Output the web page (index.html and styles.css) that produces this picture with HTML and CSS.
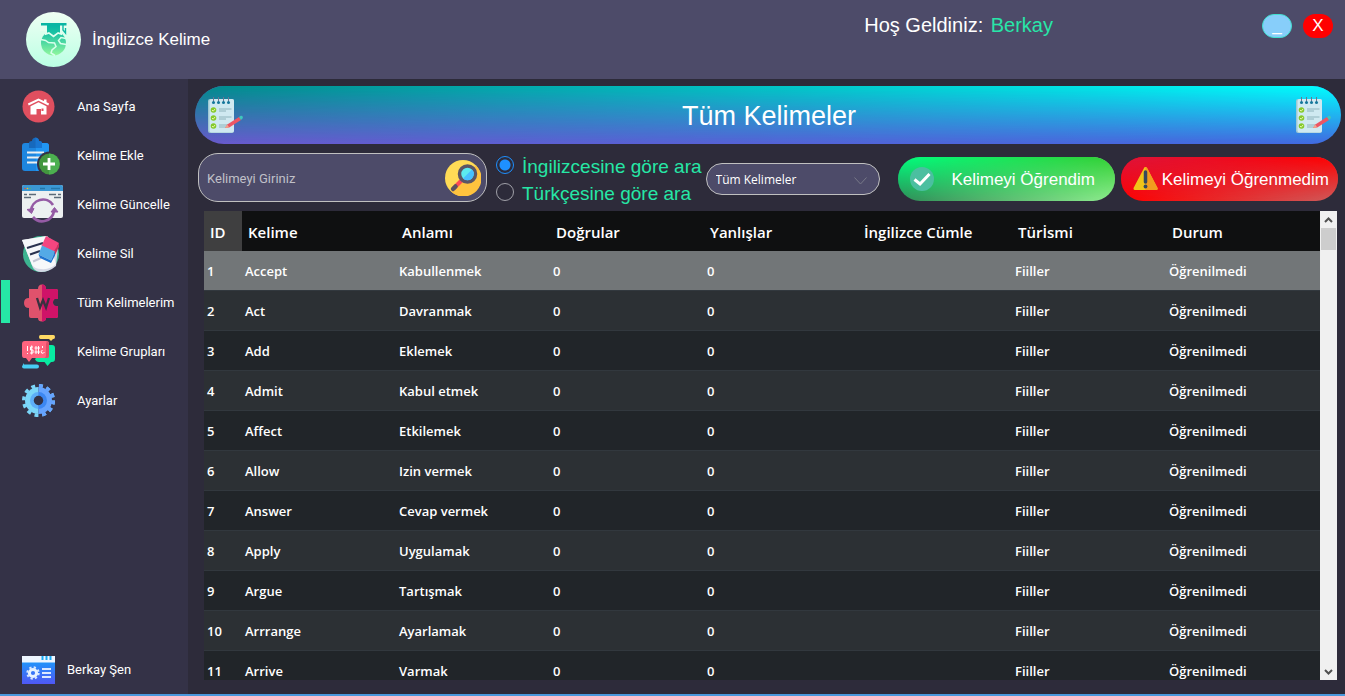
FILE: index.html
```html
<!DOCTYPE html>
<html lang="tr">
<head>
<meta charset="utf-8">
<title>İngilizce Kelime</title>
<link rel="stylesheet" href="styles.css">
</head>
<body>
<svg class="defs" aria-hidden="true">
  <symbol id="notes" viewBox="0 0 36 36">
    <rect x="1" y="2" width="26" height="34" rx="2" fill="#9fc9d3"/>
    <rect x="2.500" y="2" width="24.500" height="33.500" rx="2" fill="#cfe9f1"/>
    <path d="M6.500 0v5M11.500 0v5M16.500 0v5M21.500 0v5" stroke="#6b7590" stroke-width="1"/>
    <g fill="#15789c"><circle cx="6.500" cy="5.500" r="1.500"/><circle cx="11.500" cy="5.500" r="1.500"/><circle cx="16.500" cy="5.500" r="1.500"/><circle cx="21.500" cy="5.500" r="1.500"/></g>
    <g fill="#85c92b"><circle cx="6.500" cy="13" r="2.800"/><circle cx="6.500" cy="21" r="2.800"/><circle cx="6.500" cy="29" r="2.800"/></g>
    <path d="M5 13l1.200 1.200 2-2.400M5 21l1.200 1.200 2-2.400M5 29l1.200 1.200 2-2.400" fill="none" stroke="#e4f7a8" stroke-width="1"/>
    <path d="M12 12h12.500M12 14h7M12 20h12.500M12 22h7M12 28h9M12 30h7" stroke="#8fb4bd" stroke-width="1"/>
    <path d="M18 31l2.300-3.600L32 20l2 3-11.800 7.600z" fill="#ec5564"/>
    <path d="M18 31l2.300-3.600 1.900 3.100z" fill="#f3a58c"/>
    <path d="M32 20l1.800-1.200c1.500-.6 2.700 1.400 1.700 2.600L34 23z" fill="#3fc6bb"/>
  </symbol>
</svg>
<div class="app">
  <header class="topbar">
    <svg class="logo" viewBox="0 0 56 56" role="img" aria-label="Logo">
      <defs>
        <linearGradient id="lg1" x2="0" y2="1"><stop stop-color="#effff3"/><stop offset="1" stop-color="#bbffe4"/></linearGradient>
        <linearGradient id="lg3" gradientUnits="userSpaceOnUse" x1="0" y1="11" x2="0" y2="45"><stop stop-color="#00b3a4"/><stop offset=".3" stop-color="#1cc3a4"/><stop offset="1" stop-color="#9bfb9e"/></linearGradient>
      </defs>
      <circle cx="27.500" cy="27.500" r="27.500" fill="url(#lg1)"/>
      <circle cx="27.500" cy="31" r="12.500" fill="url(#lg3)"/>
      <path d="M20 12h15v9.500l-3-1-4.500 3.500-4.500-3.500-3 1z" fill="url(#lg3)" stroke="#e0fff0" stroke-width="2.400"/>
      <path d="M14 14h6.500v5H14zM34.500 14H42v5h-7.500z" fill="#e6fff0"/>
      <path d="M21 13h13v7.800l-2-.8-4.500 3.200L23 20l-2 .8z" fill="url(#lg3)"/>
      <path d="M15 11h25.500v2.500H15z" fill="#0ab6a4"/>
      <path d="M37 13v5l2.500 3v-5" fill="none" stroke="#0fb9a4" stroke-width="1.400"/>
      <path d="M15 27.500l4.500 1 3 2 6 .5 1.500 3.500-4 3.500-1 3 4 2.500" fill="none" stroke="#d9ffec" stroke-width="1.500"/>
      <path d="M40 26.500l-5-1-2.500 3 2 3 6 1" fill="none" stroke="#d9ffec" stroke-width="1.500"/>
    </svg>
    <h1 class="brand">İngilizce Kelime</h1>
    <p class="welcome">Hoş Geldiniz: <span class="user">Berkay</span></p>
    <div class="window-buttons">
      <button class="win win-min" type="button" aria-label="Küçült"><span>_</span></button>
      <button class="win win-close" type="button" aria-label="Kapat">X</button>
    </div>
  </header>

  <nav class="sidebar">
    <a class="item" href="#"><span class="icon">
      <svg width="33" height="33" viewBox="0 0 33 33"><circle cx="16.500" cy="16.500" r="16" fill="#e04f5f"/><path d="M6.300 14.500L16.500 9.500l10.200 5" fill="none" stroke="#fff" stroke-width="2"/><path d="M8.500 16.200l8-4 8 4v8.300H19v-5.500h-4.500v5.500h-6z" fill="#fff"/><path d="M22 9.500h2.500v4L22 12z" fill="#fff"/><path d="M19.500 18.500h2v2.500h-2z" fill="#e04f5f"/></svg>
    </span>Ana Sayfa</a>
    <a class="item" href="#"><span class="icon">
      <svg width="38" height="38" viewBox="0 0 38 38"><path d="M3 6h21q3 0 3 3v25H3q-3 0-3-3V9q0-3 3-3z" fill="#1e86df"/><path d="M14 6h10q3 0 3 3v25H14z" fill="#2196f3"/><path d="M7 11V6q0-2 3-2 0-3 3.500-3.500Q17 1 17 4q3 0 3 2v5z" fill="#1669bd"/><path d="M13.500.5Q17 1 17 4q3 0 3 2v5h-6.500z" fill="#1976d2"/><path d="M5 15.500h17M5 20.500h15M5 25.500h12" stroke="#eceff1" stroke-width="2"/><circle cx="27.500" cy="27" r="12.500" fill="#343247"/><circle cx="27.500" cy="27" r="10.500" fill="#43963f"/><path d="M27 16.500a10.500 10.500 0 010 21z" fill="#4caf50"/><path d="M27 21v12M21 27h12" stroke="#fff" stroke-width="2.800"/></svg>
    </span>Kelime Ekle</a>
    <a class="item" href="#"><span class="icon">
      <svg width="41" height="39" viewBox="0 0 41 39"><rect width="41" height="33" rx="2" fill="#ecf0f1"/><path d="M0 6V2q0-2 2-2h37q2 0 2 2v4z" fill="#3b97d3"/><path d="M18 3.500h5M29 3.500h9" stroke="#2677aa" stroke-width="1.500"/><circle cx="3" cy="3.500" r=".8" fill="#e64c3c"/><circle cx="5.500" cy="3.500" r=".8" fill="#f0c419"/><circle cx="8" cy="3.500" r=".8" fill="#4fba6f"/><path d="M2 9.500h3M7 9.500h7M27 9.500h7M36 9.500h3M2 12.500h7M32 12.500h7" stroke="#5b6b79" stroke-width="1.300"/><path d="M9 26a12 12 0 0122-6" fill="none" stroke="#955ba5" stroke-width="2.700"/><path d="M32 26a12 12 0 01-21 6" fill="none" stroke="#955ba5" stroke-width="2.700"/><path d="M5 24.500l7-1-2.500 5zM29 27l3.500-4.500L36 27z" fill="#955ba5" stroke="#955ba5"/></svg>
    </span>Kelime Güncelle</a>
    <a class="item" href="#"><span class="icon">
      <svg width="38" height="38" viewBox="0 0 38 38"><circle cx="19" cy="19" r="18" fill="#3cb490"/><path d="M0 5L25 1l11 12-2 18q-7 6-15 6-5 0-8-4z" fill="#d5d9e6"/><path d="M0 5L25 1l9 28q-6 6-15 5-6 0-9-4z" fill="#f6f8fa"/><path d="M5 13l16-5M8 19.500l10-3.500" stroke="#2b3350" stroke-width="2"/><path d="M11 26.500l8-3.500" stroke="#c4c7d5" stroke-width="2"/><path d="M24 1l13 7-4.500 9-13-6z" fill="#f54680"/><path d="M37 8v4l-4.500 9-1-4z" fill="#c9305f"/><path d="M20 10.500l13 6-4 9-12.500-6z" fill="#54aae6"/><path d="M16.500 19.500l12.500 6 4-9v4L29 28l-11-5z" fill="#1f74cf"/></svg>
    </span>Kelime Sil</a>
    <a class="item item-active" href="#" aria-current="page"><span class="icon">
      <svg width="38" height="38" viewBox="0 0 38 38"><path d="M7 5h9q0-4.500 4-4.500T24 5h10q2 0 2 2v8h-3q-2 0-2 3.500t3 3.500h2v10q0 2-2 2H24q0 3.500-4 3.500T16 34H9q-2 0-2-2v-8q-5 0-5-5t5-5z" fill="#e0526c"/><path d="M20 .5q4 0 4 4.500h10q2 0 2 2v8h-3q-2 0-2 3.500t3 3.500h2v10q0 2-2 2H24q0 3.500-4 3.500z" fill="#cf1368"/><path d="M15 14l3 9.500 3-7.500 3 7.500L27 14" fill="none" stroke="#37313f" stroke-width="2.300"/></svg>
    </span>Tüm Kelimelerim</a>
    <a class="item" href="#"><span class="icon">
      <svg width="33" height="34" viewBox="0 0 33 34"><path d="M18.500 0h13Q33 0 33 2t-1.500 2H31l-2 2-2-2h-8.500Q17 4 17 2t1.500-2z" fill="#ffda64"/><path d="M27 10h3q3 0 3 3v11q0 3-3 3h-1l-3.500 4-3-4H17q-3 0-4-3z" fill="#08eba2"/><path d="M3 6h21q3 0 3 3v12q0 2-3 2H10l-3 4-3-4H2q-2 0-2-3V9q0-3 3-3z" fill="#ff647f"/><path d="M25 6q2 0 2 3v12q0 2-3 2h-2q2 0 2-3V9z" fill="#dd4e67"/><path d="M5.500 11v5M5.500 18v1M11 12H8.500v3H11v3H8M9.700 10.500v9M14 11v8M16.500 11v8M12.500 13h5.500M12.500 17h5.500M20.500 11v2M20.500 15q-2 1-1 3 2 1 3-1" stroke="#fff" stroke-width="1" fill="none"/><path d="M2 29.500h13q2 0 2 2t-2 2H2q-2 0-2-2l1-2V28z" fill="#47cdf4"/></svg>
    </span>Kelime Grupları</a>
    <a class="item" href="#"><span class="icon">
      <svg width="33" height="33" viewBox="0 0 33 33"><circle cx="16.500" cy="16.500" r="14.800" fill="none" stroke="#7bd6f8" stroke-width="3.400" stroke-dasharray="3.875 3.875"/><path d="M16.500 3a13.500 13.500 0 000 27z" fill="#7bd6f8"/><clipPath id="half"><path d="M16.500 0H33v33H16.500z"/></clipPath><circle cx="16.500" cy="16.500" r="14.800" fill="none" stroke="#66a4ff" stroke-width="3.400" stroke-dasharray="3.875 3.875" clip-path="url(#half)"/><path d="M16.500 3a13.500 13.500 0 010 27z" fill="#66a4ff"/><path d="M16.500 8a8.500 8.500 0 000 17z" fill="#5daef8"/><path d="M16.500 8a8.500 8.500 0 010 17z" fill="#3c87f2"/><circle cx="16.500" cy="16.500" r="4.700" fill="#343247"/></svg>
    </span>Ayarlar</a>
    <a class="item profile" href="#"><span class="icon">
      <svg width="33" height="28" viewBox="0 0 33 28"><defs><linearGradient id="pg" x2="0" y2="1"><stop stop-color="#14a5fb"/><stop offset="1" stop-color="#5057f5"/></linearGradient></defs><path d="M0 0h33v28H0z" fill="url(#pg)"/><path d="M0 0h33v6.500H0z" fill="#eef6ff"/><path d="M20.500 0v4M24.500 0v4M28.500 0v4" stroke="#18aaf5" stroke-width="2"/><circle cx="11" cy="17" r="5.700" fill="none" stroke="#d7e8ff" stroke-width="2" stroke-dasharray="2.240 2.240"/><circle cx="11" cy="17" r="3.600" fill="none" stroke="#e5f1ff" stroke-width="3"/><path d="M20 13h9M20 17h9M20 21h9" stroke="#dbe8ff" stroke-width="1.800"/></svg>
    </span>Berkay Şen</a>
  </nav>

  <main class="main">
    <div class="banner">
      <svg class="notes"><use href="#notes"/></svg>
      <h2 class="banner-title">Tüm Kelimeler</h2>
      <svg class="notes"><use href="#notes"/></svg>
    </div>

    <form class="toolbar">
      <div class="search">
        <input class="search-input" type="text" placeholder="Kelimeyi Giriniz" aria-label="Kelimeyi Giriniz">
        <button class="search-button" type="button" aria-label="Ara">
          <svg width="36" height="36" viewBox="0 0 36 36"><circle cx="18" cy="18" r="18" fill="#ffdb56"/><path d="M31 5.500A18 18 0 016 31.500z" fill="#ffc33e"/><path d="M17 20L8.500 28.500" stroke="#ff4b55" stroke-width="4"/><path d="M10.500 26.500L8 29" stroke="#5b5360" stroke-width="4.500" stroke-linecap="round"/><circle cx="22.500" cy="14" r="8" fill="#5cebf0" stroke="#5b5565" stroke-width="3.500"/><path d="M27 9.500A6.300 6.300 0 0118 18.500z" fill="#48bfff"/></svg>
        </button>
      </div>
      <div class="radios">
        <label class="radio"><input type="radio" name="dil" checked>İngilizcesine göre ara</label>
        <label class="radio"><input type="radio" name="dil">Türkçesine göre ara</label>
      </div>
      <div class="select">
        <select aria-label="Kelime grubu"><option>Tüm Kelimeler</option></select>
        <svg class="chevron" width="13" height="8" viewBox="0 0 13 8"><path d="M.5.500l6 6.500 6-6.500" fill="none" stroke="#777888"/></svg>
      </div>
      <div class="actions">
        <button class="action action-learned" type="button">
          <svg width="24" height="24" viewBox="0 0 24 24"><circle cx="12" cy="12" r="12" fill="#4bbfa0"/><path d="M4.500 12.500l5.500 4.500L19.500 7" fill="none" stroke="#fff" stroke-width="3"/></svg>
          <span>Kelimeyi Öğrendim</span>
        </button>
        <button class="action action-missed" type="button">
          <svg width="25" height="24" viewBox="0 0 25 24"><path d="M12.500 1.500L23 21.500H2z" fill="#f0c419" stroke="#f0c419" stroke-width="3" stroke-linejoin="round"/><path d="M12.500 0q1.400 0 2 1.500L24.600 21q.6 2-1.600 2H12.500z" fill="#f29c1f"/><path d="M12.500 5v10" stroke="#35495e" stroke-width="3.500" stroke-linecap="round"/><circle cx="12.500" cy="19.500" r="1.900" fill="#35495e"/></svg>
          <span>Kelimeyi Öğrenmedim</span>
        </button>
      </div>
    </form>

    <div class="grid">
      <div class="grid-view">
        <table>
          <thead><tr><th class="id">ID</th><th>Kelime</th><th>Anlamı</th><th>Doğrular</th><th>Yanlışlar</th><th>İngilizce Cümle</th><th>Türİsmi</th><th>Durum</th></tr></thead>
          <tbody>
            <tr class="selected"><td>1</td><td>Accept</td><td>Kabullenmek</td><td>0</td><td>0</td><td></td><td>Fiiller</td><td>Öğrenilmedi</td></tr>
            <tr><td>2</td><td>Act</td><td>Davranmak</td><td>0</td><td>0</td><td></td><td>Fiiller</td><td>Öğrenilmedi</td></tr>
            <tr><td>3</td><td>Add</td><td>Eklemek</td><td>0</td><td>0</td><td></td><td>Fiiller</td><td>Öğrenilmedi</td></tr>
            <tr><td>4</td><td>Admit</td><td>Kabul etmek</td><td>0</td><td>0</td><td></td><td>Fiiller</td><td>Öğrenilmedi</td></tr>
            <tr><td>5</td><td>Affect</td><td>Etkilemek</td><td>0</td><td>0</td><td></td><td>Fiiller</td><td>Öğrenilmedi</td></tr>
            <tr><td>6</td><td>Allow</td><td>Izin vermek</td><td>0</td><td>0</td><td></td><td>Fiiller</td><td>Öğrenilmedi</td></tr>
            <tr><td>7</td><td>Answer</td><td>Cevap vermek</td><td>0</td><td>0</td><td></td><td>Fiiller</td><td>Öğrenilmedi</td></tr>
            <tr><td>8</td><td>Apply</td><td>Uygulamak</td><td>0</td><td>0</td><td></td><td>Fiiller</td><td>Öğrenilmedi</td></tr>
            <tr><td>9</td><td>Argue</td><td>Tartışmak</td><td>0</td><td>0</td><td></td><td>Fiiller</td><td>Öğrenilmedi</td></tr>
            <tr><td>10</td><td>Arrrange</td><td>Ayarlamak</td><td>0</td><td>0</td><td></td><td>Fiiller</td><td>Öğrenilmedi</td></tr>
            <tr><td>11</td><td>Arrive</td><td>Varmak</td><td>0</td><td>0</td><td></td><td>Fiiller</td><td>Öğrenilmedi</td></tr>
          </tbody>
        </table>
      </div>
      <div class="scrollbar">
        <button class="scroll-arrow" type="button" aria-label="Yukarı"><svg width="9" height="6" viewBox="0 0 9 6"><path d="M1 5l3.500-3.500L8 5" fill="none" stroke="#505050" stroke-width="2"/></svg></button>
        <div class="scroll-track"><div class="scroll-thumb"></div></div>
        <button class="scroll-arrow" type="button" aria-label="Aşağı"><svg width="9" height="6" viewBox="0 0 9 6"><path d="M1 1l3.500 3.500L8 1" fill="none" stroke="#505050" stroke-width="2"/></svg></button>
      </div>
    </div>
  </main>
</div>
</body>
</html>
```
FILE: styles.css
```css
* { box-sizing: border-box; }

body {
  margin: 0;
  background: #2d2b3a;
  color: #fff;
  font-family: "Liberation Sans", Arial, sans-serif;
}

button, input, select { font-family: inherit; color: inherit; }
button { border: 0; padding: 0; background: none; }
h1, h2, p { margin: 0; font-weight: 400; }

.defs { position: absolute; width: 0; height: 0; }

.app {
  display: grid;
  grid-template: auto minmax(0, 1fr) / 188px minmax(0, 1fr);
  height: 100vh;
  border-bottom: 2px solid #4a98dc;
}

/* Top bar */
.topbar {
  grid-column: 1 / -1;
  display: flex;
  align-items: flex-start;
  padding: 12px 12px 11px 26px;
  background: #4d4b69;
}
.logo { width: 56px; height: 56px; }
.brand { margin-left: 10px; font-size: 17px; line-height: 56px; }
.welcome { margin-left: auto; font-size: 20px; line-height: 26px; }
.user { margin-left: 2px; color: #28e6a8; }
.window-buttons { display: flex; gap: 11px; margin-left: 209px; padding-top: 2px; }
.win { width: 30px; height: 24px; border-radius: 12px; font-size: 17px; line-height: 22px; }
.win-min { border: 1px solid #40e0d0; background: #87cefa; }
.win-close { background: #f00; }

/* Sidebar */
.sidebar {
  display: flex;
  flex-direction: column;
  padding: 3px 0 0;
  background: #343247;
}
.item {
  position: relative;
  display: flex;
  align-items: center;
  gap: 13px;
  height: 49px;
  padding-left: 22px;
  color: #fff;
  font-family: Roboto, "Liberation Sans", sans-serif;
  font-size: 13px;
  text-decoration: none;
}
.item-active::before {
  content: "";
  position: absolute;
  left: 1px;
  top: 2px;
  width: 9px;
  height: 43px;
  background: #26e7a6;
}
.icon { display: flex; width: 42px; }
.profile { margin-top: auto; gap: 3px; }

/* Main area */
.main {
  display: flex;
  flex-direction: column;
  padding: 7px 4px 14px 7px;
  min-height: 0;
}

.banner, .action {
  position: relative;
  overflow: hidden;
  isolation: isolate;
  background: linear-gradient(to right, var(--bl), var(--br));
}
.banner::before, .action::before {
  content: "";
  position: absolute;
  inset: 0;
  z-index: -1;
  background: linear-gradient(to right, var(--tl), var(--tr));
  -webkit-mask-image: linear-gradient(#000, transparent);
  mask-image: linear-gradient(#000, transparent);
}
.banner {
  --tl: #008b8b; --tr: #00ffff; --bl: #6a5acd; --br: #4169e1;
  display: flex;
  align-items: center;
  justify-content: space-between;
  height: 58px;
  padding: 0 10px 0 12px;
  border-radius: 30px;
}
.banner-title { padding-top: 2px; font-size: 27px; }
.notes { width: 36px; height: 36px; }

.toolbar { display: flex; padding: 8px 3px 0; height: 67px; }
.search {
  display: flex;
  align-items: center;
  width: 289px;
  height: 49px;
  margin-top: 1px;
  padding: 0 5px 0 8px;
  border: 1px solid #c0c0c0;
  border-radius: 20px;
  background: #4d4b69;
}
.search-input {
  flex: 1;
  min-width: 0;
  padding: 2px 0 0;
  border: 0;
  outline: 0;
  background: none;
  font-family: Roboto, "Liberation Sans", sans-serif;
  font-size: 13px;
}
.search-input::placeholder { color: #c0c0c8; opacity: 1; }
.search-button { display: flex; }

.radios { margin-left: 9px; padding-top: 1px; }
.radio {
  display: flex;
  align-items: center;
  gap: 8px;
  height: 27px;
  font-size: 19px;
  color: #26e7a6;
  white-space: nowrap;
}
.radio input {
  appearance: none;
  width: 18px;
  height: 18px;
  margin: 0 0 4px;
  border: 1px solid #a0a0a8;
  border-radius: 50%;
}
.radio input:checked {
  border-color: #1e90ff;
  background: radial-gradient(circle, #1e90ff 5px, transparent 6px);
}

.select { position: relative; width: 174px; height: 32px; margin: 11px 0 0 4px; }
.select select {
  appearance: none;
  width: 100%;
  height: 100%;
  padding: 0 9px;
  border: 1px solid #c0c0c0;
  border-radius: 16px;
  background: #4d4b69;
  font: 12px "Open Sans", sans-serif;
}
.chevron { position: absolute; right: 13px; top: 14px; pointer-events: none; }

.actions { display: flex; gap: 6px; margin: 5px 0 0 auto; }
.action {
  display: flex;
  align-items: center;
  width: 217px;
  height: 44px;
  border-radius: 22px;
  font-size: 17px;
  padding: 0 9px 0 12px;
  white-space: nowrap;
}
.action span { flex: 1; padding-top: 2px; text-align: right; }
.action-learned { --tl: #00ff7f; --tr: #32cd32; --bl: #2e8b57; --br: #90ee90; padding-right: 20px; }
.action-missed { --tl: #dc143c; --tr: #ff0000; --bl: #ff0000; --br: #cd5c5c; }

/* Word table */
.grid { display: flex; flex: 1; min-height: 0; margin: 0 4px 0 9px; }
.grid-view { flex: 1; overflow: hidden; background: #212529; }
table {
  width: 100%;
  table-layout: fixed;
  border-collapse: separate;
  border-spacing: 0;
  font-family: "Open Sans", "Noto Sans", sans-serif;
  font-weight: 600;
  text-align: left;
  white-space: nowrap;
}
th { height: 40px; padding: 2px 0 0 6px; background: #0f1011; font-size: 15px; font-weight: 600; }
th.id { width: 38px; background: #3f3f40; }
td { height: 40px; padding: 0 0 0 3px; border-bottom: 1px solid #32383e; background: #212529; font-size: 13px; }
tr:nth-child(even) td { background: #2c3034; }
tr.selected td { background: #727678; }

.scrollbar { display: flex; flex-direction: column; width: 17px; background: #f0f0f0; }
.scroll-arrow { display: flex; align-items: center; justify-content: center; height: 17px; }
.scroll-track { flex: 1; }
.scroll-thumb { width: 15px; height: 22px; margin: 0 auto; background: #cdcdcd; }
```
